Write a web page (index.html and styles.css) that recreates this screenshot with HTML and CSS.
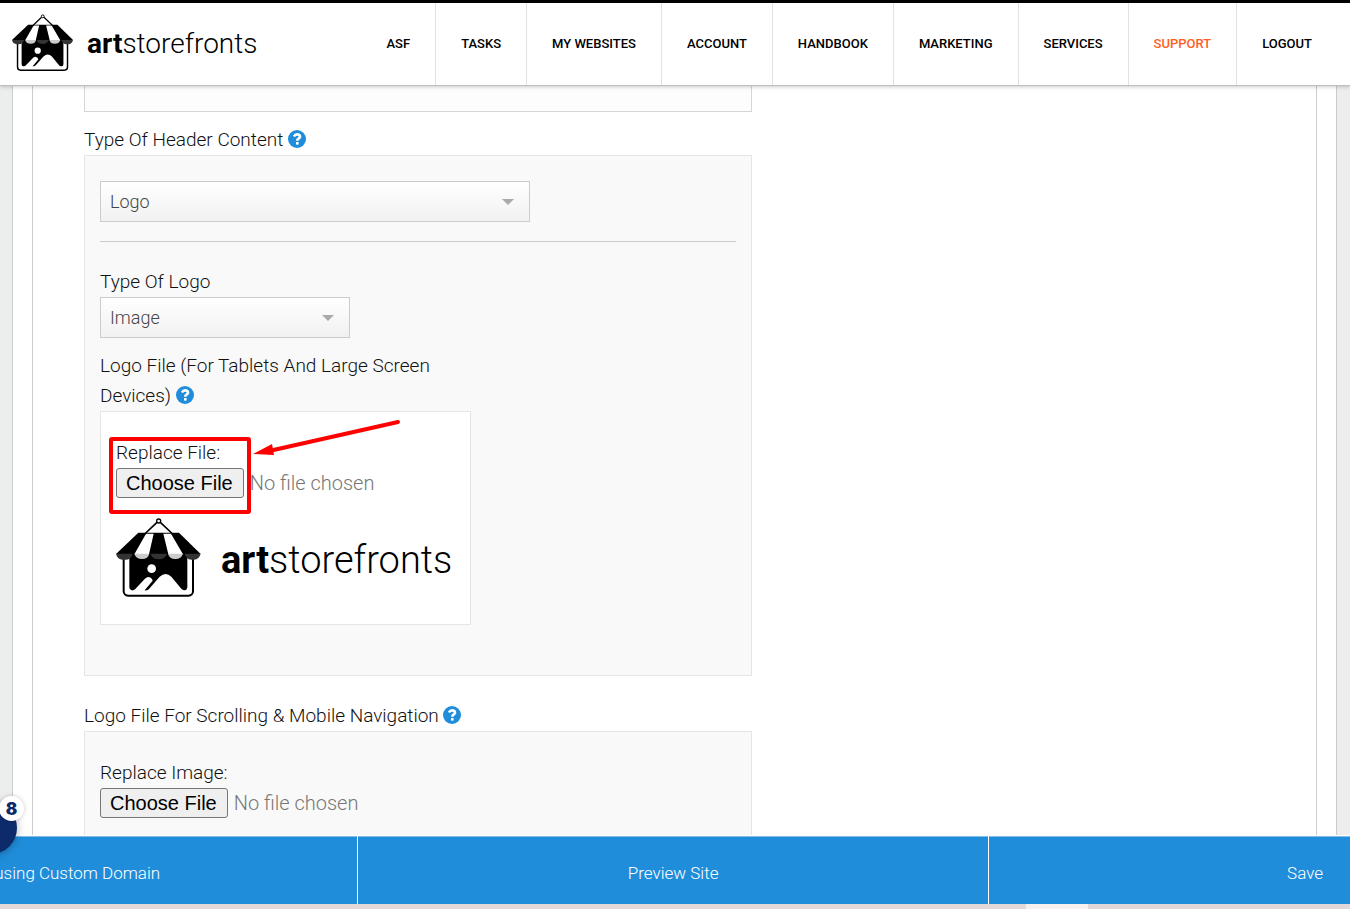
FILE: index.html
```html
<!DOCTYPE html>
<html lang="en">
<head>
    <meta charset="UTF-8">
    <meta name="viewport" content="width=device-width, initial-scale=1.0">
    <title>Art Storefronts</title>
    <link rel="stylesheet" href="styles.css">
</head>
<body>
    <svg class="sprite" aria-hidden="true">
        <symbol id="store" viewBox="48 42 258 238">
            <rect x="71" y="140" width="208" height="134" rx="13" fill="#fff" stroke="#000" stroke-width="6"/>
            <path d="M88 145H262V249Q261 259 252 258Q246 257 242 251L214 217Q197 201 179 217L147 254Q143 259 134 258L158 229Q155 218 144 218Q139 219 134 224L106 254Q101 259 95 258Q88 257 88 249Z"/>
            <circle cx="155" cy="193" r="13" fill="#fff"/>
            <path d="M115 85H237L302 149H48Z"/>
            <path d="M138 88H161L147 150H103ZM190 88H213L249 150H205Z" fill="#fff"/>
            <path d="M48 148H98Q94 166 76 166H68Q51 164 48 148ZM151 148H201Q195 165 176 165T151 148ZM254 148H302Q298 165 282 166H274Q258 165 254 148Z" fill="#333"/>
            <path d="M103 148H148Q144 164 126 164T103 148ZM204 148H249Q244 164 226 164T204 148Z" fill="#ccc"/>
            <path d="M171 54L134 89M181 54L218 89" fill="none" stroke="#000" stroke-width="5"/>
            <circle cx="176" cy="50" r="6" fill="#fff" stroke="#000" stroke-width="4"/>
        </symbol>
        <symbol id="help" viewBox="0 0 18 18">
            <circle cx="9" cy="9" r="9" fill="#208ddb"/>
            <path d="M6 6.500Q7 4.400 9.200 4.400C12.400 4.400 12.800 7.500 10.500 8.600Q9.300 9.300 9.300 10.700" fill="none" stroke="#fff" stroke-width="2.600"/>
            <rect x="8" y="12" width="2.600" height="2.600" fill="#fff"/>
        </symbol>
    </svg>

    <header class="header">
        <a class="logo" href="#">
            <svg class="logo-icon" aria-hidden="true"><use href="#store"/></svg>
            <span class="logo-text"><b>art</b>storefronts</span>
        </a>
        <nav class="nav">
            <a href="#">ASF</a>
            <a href="#">TASKS</a>
            <a href="#">MY WEBSITES</a>
            <a href="#">ACCOUNT</a>
            <a href="#">HANDBOOK</a>
            <a href="#">MARKETING</a>
            <a href="#">SERVICES</a>
            <a href="#" class="support">SUPPORT</a>
            <a href="#">LOGOUT</a>
        </nav>
    </header>

    <main class="main">
        <div class="outer">
            <div class="inner">
                <form class="form">
                    <div class="previous"></div>

                    <div class="label-row">
                        <label for="header-type">Type Of Header Content</label>
                        <button type="button" class="help" aria-label="Help"><svg><use href="#help"/></svg></button>
                    </div>
                    <div class="panel">
                        <div class="select wide">
                            <select id="header-type"><option>Logo</option></select>
                        </div>
                        <hr>
                        <div class="label-row logo-type">
                            <label for="logo-type">Type Of Logo</label>
                        </div>
                        <div class="select">
                            <select id="logo-type"><option>Image</option></select>
                        </div>
                        <div class="label-row narrow">
                            Logo File (For Tablets And Large Screen Devices)
                            <button type="button" class="help" aria-label="Help"><svg><use href="#help"/></svg></button>
                        </div>
                        <div class="file-box">
                            <label for="logo-file">Replace File:</label>
                            <input type="file" id="logo-file">
                            <div class="logo preview">
                                <svg class="logo-icon" aria-hidden="true"><use href="#store"/></svg>
                                <span class="logo-text"><b>art</b>storefronts</span>
                            </div>
                            <svg class="marker" viewBox="0 0 310 110" aria-hidden="true">
                                <rect x="10" y="27" width="138" height="73" rx="1" fill="none" stroke="#f00" stroke-width="4"/>
                                <path d="M297 10L168 39" stroke="#f00" stroke-width="4" stroke-linecap="round"/>
                                <path d="M152 42L171 32L173 43Z" fill="#f00"/>
                            </svg>
                        </div>
                    </div>

                    <div class="label-row section">
                        Logo File For Scrolling &amp; Mobile Navigation
                        <button type="button" class="help" aria-label="Help"><svg><use href="#help"/></svg></button>
                    </div>
                    <div class="panel mobile">
                        <label for="mobile-file">Replace Image:</label>
                        <input type="file" id="mobile-file">
                    </div>
                </form>
            </div>
        </div>
    </main>

    <footer class="actions">
        <a href="#" class="domain">using Custom Domain</a>
        <a href="#">Preview Site</a>
        <a href="#" class="save">Save</a>
    </footer>
    <div class="strip"></div>

    <button type="button" class="chat" aria-label="Notifications"><span class="count">8</span></button>
</body>
</html>
```
FILE: styles.css
```css
* {
    box-sizing: border-box;
}

body {
    margin: 0;
    height: 100vh;
    display: flex;
    flex-direction: column;
    overflow: hidden;
    font-family: Roboto, "Liberation Sans", sans-serif;
    font-size: 19px;
    font-weight: 300;
    line-height: 30px;
    color: #111;
}

a {
    color: inherit;
    text-decoration: none;
}

.sprite {
    display: none;
}

/* header */
.header {
    position: relative;
    z-index: 1;
    display: flex;
    justify-content: space-between;
    border-top: 3px solid #000;
    border-bottom: 1px solid #bbbfbe;
    background: #fff;
    box-shadow: 0 1px 4px rgba(0, 0, 0, 0.2);
}

.logo {
    display: flex;
    align-items: center;
    gap: 13px;
    padding: 0 0 2px 12px;
    color: #000;
}

.logo-icon {
    width: 62px;
    height: 58px;
}

.logo-text {
    padding-top: 2px;
    font-size: 28px;
    font-weight: 300;
}

.logo-text b {
    font-weight: 700;
}

.nav {
    display: flex;
    padding-right: 13px;
}

.nav a {
    padding: 0 25px;
    border-left: 1px solid #e2e2e2;
    font-size: 13px;
    font-weight: 500;
    line-height: 82px;
    color: #000;
}

.nav a:first-child {
    border-left: none;
}

.nav .support {
    color: #ff5e1f;
}

/* content */
.main {
    flex: 1;
    min-height: 0;
    display: flex;
    overflow: hidden;
    padding: 0 13px 0 12px;
    background: #eceeed;
}

.outer,
.inner {
    flex: 1;
    display: flex;
    border: 1px solid #ccc;
    border-width: 0 1px;
    background: #fff;
}

.outer {
    padding: 0 19px;
}

.inner {
    padding-left: 51px;
}

.form {
    width: 100%;
    max-width: 668px;
}

.previous {
    height: 26px;
    border: 1px solid #d5d5d5;
    border-top: none;
    background: #fdfdfd;
}

.label-row {
    margin-top: 13px;
}

.label-row.logo-type,
.label-row.section {
    margin-top: 25px;
}

.label-row.narrow {
    max-width: 370px;
}

.help {
    width: 18px;
    height: 18px;
    padding: 0;
    border: none;
    background: none;
    vertical-align: -2px;
    cursor: pointer;
}

.help svg {
    display: block;
    width: 18px;
    height: 18px;
}

.panel {
    padding: 25px 15px 50px;
    border: 1px solid #e5e5e5;
    background: #f9f9f9;
}

.panel.mobile {
    padding-top: 26px;
}

.panel label {
    display: block;
}

.select {
    position: relative;
    max-width: 250px;
}

.select.wide {
    max-width: 430px;
}

.select select {
    display: block;
    width: 100%;
    height: 41px;
    padding: 0 9px;
    border: 1px solid #ccc;
    border-radius: 0;
    appearance: none;
    background: linear-gradient(#fff, #f1f1f1);
    font: 300 18px Roboto, sans-serif;
    color: #444;
}

.select::after {
    content: "";
    position: absolute;
    top: 18px;
    right: 16px;
    border: 6px solid transparent;
    border-top-color: #aaa;
    border-bottom: none;
    pointer-events: none;
}

hr {
    margin: 19px 0 0;
    border: none;
    border-top: 1px solid #ccc;
}

.file-box {
    position: relative;
    max-width: 371px;
    padding: 26px 15px;
    border: 1px solid #e5e5e5;
    background: #fff;
}

input[type="file"] {
    display: block;
    width: 100%;
    font: 300 20px Roboto, sans-serif;
    color: #777;
}

input[type="file"]::file-selector-button {
    height: 30px;
    margin: 0 6px 0 0;
    padding: 0 10px 0 9px;
    border: 1px solid #767676;
    border-radius: 3px;
    background: #efefef;
    font: 20px "Liberation Sans", Arial, sans-serif;
    color: #000;
}

.preview {
    gap: 19px;
    margin-top: 20px;
    padding: 0;
}

.preview .logo-icon {
    width: 86px;
    height: 80px;
}

.preview .logo-text {
    padding-top: 4px;
    font-size: 38px;
}

.marker {
    position: absolute;
    top: 0;
    left: 0;
    width: 310px;
    height: 110px;
    pointer-events: none;
}

/* bottom bar */
.actions {
    display: grid;
    grid-template-columns: 26.45% 1fr 26.8%;
    border-top: 1px solid #fff;
    background: #208ddb;
    box-shadow: inset 0 1px #7fbdea;
    font-size: 17px;
    text-align: center;
    color: #fff;
}

.actions a {
    padding-top: 6px;
    line-height: 62px;
}

.actions a + a {
    border-left: 1px solid #fff;
}

.actions .domain {
    display: flex;
    justify-content: flex-end;
    padding-right: 197px;
    white-space: nowrap;
}

.actions .save {
    padding-right: 27px;
    text-align: right;
}

.strip {
    height: 5px;
    background: linear-gradient(90deg, #e5d8d8 76%, #f6f0ef 76%, #f6f0ef 80.6%, #e1d6d8 80.6%);
}

.chat {
    position: absolute;
    z-index: 2;
    bottom: 55px;
    left: -35px;
    width: 52px;
    height: 52px;
    padding: 0;
    border: none;
    border-radius: 50%;
    background: #0d2b6b;
    box-shadow: 0 1px 8px rgba(0, 0, 0, 0.3);
}

.count {
    position: absolute;
    top: -6px;
    right: -7px;
    width: 25px;
    height: 25px;
    border-radius: 50%;
    background: #fff;
    box-shadow: 0 0 5px rgba(0, 0, 0, 0.2);
    font: 900 17px/26px Inter, sans-serif;
    color: #0d2b6b;
}
```
